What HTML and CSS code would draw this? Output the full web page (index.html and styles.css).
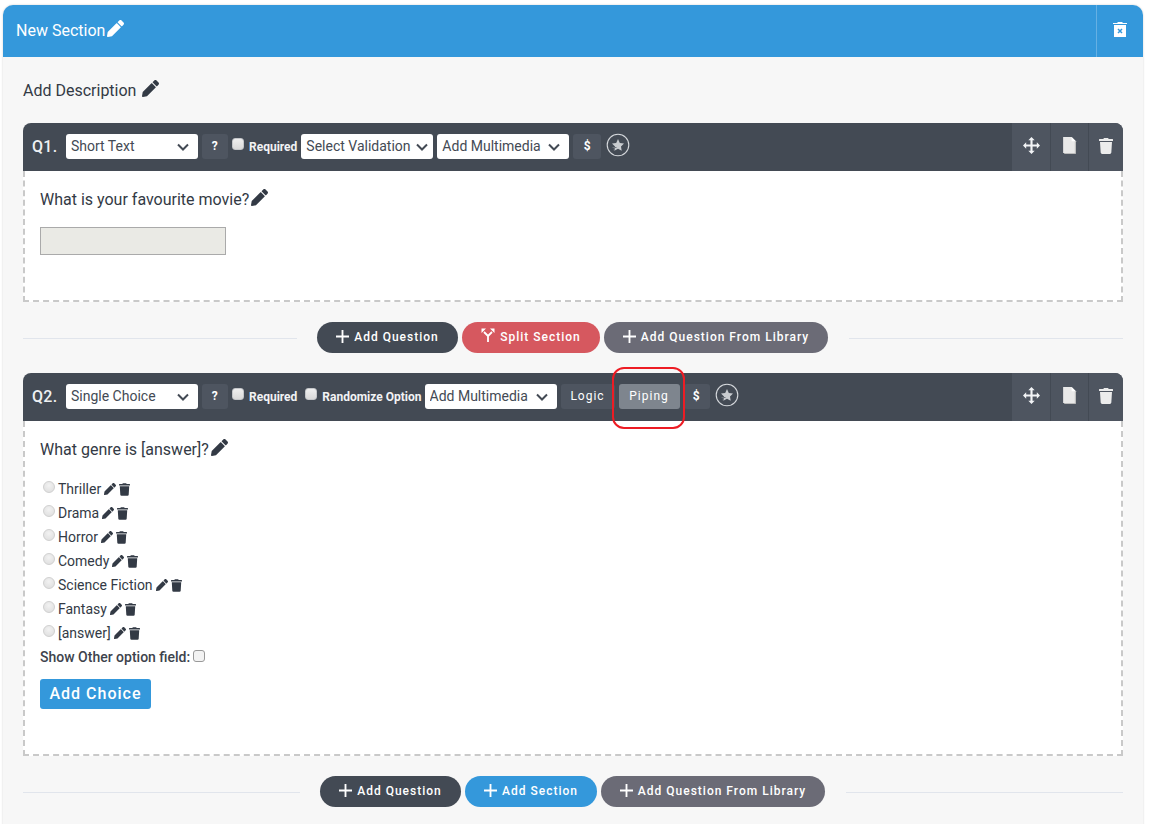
FILE: index.html
```html
<!DOCTYPE html>
<html lang="en">
<head>
<meta charset="utf-8">
<title>Survey builder</title>
<link rel="stylesheet" href="styles.css">
</head>
<body>
<svg class="defs" aria-hidden="true">
  <symbol id="pencil" viewBox="0 0 512 512"><path d="M497.9 142.1l-46.1 46.1c-4.7 4.7-12.3 4.7-17 0l-111-111c-4.7-4.7-4.7-12.3 0-17l46.1-46.1c18.7-18.7 49.1-18.7 67.9 0l60.1 60.1c18.8 18.7 18.8 49.1 0 67.9zM284.2 99.8L21.6 362.4.4 483.9c-2.9 16.4 11.4 30.6 27.8 27.8l121.5-21.3 262.6-262.6c4.7-4.7 4.7-12.3 0-17l-111-111c-4.8-4.7-12.4-4.7-17.1 0z"/></symbol>
  <symbol id="trash" viewBox="0 0 448 512"><path d="M432 32H312l-9.4-18.7A24 24 0 0 0 281.1 0H166.8a23.72 23.72 0 0 0-21.4 13.3L136 32H16A16 16 0 0 0 0 48v32a16 16 0 0 0 16 16h416a16 16 0 0 0 16-16V48a16 16 0 0 0-16-16zM53.2 467a48 48 0 0 0 47.9 45h245.8a48 48 0 0 0 47.9-45L416 128H32z"/></symbol>
  <symbol id="plus" viewBox="0 0 14 14"><path d="M6 0h2v6h6v2H8v6H6V8H0V6h6z"/></symbol>
  <symbol id="chev" viewBox="0 0 12 8"><path d="M1 1.5l5 5 5-5" fill="none" stroke="currentColor" stroke-width="2"/></symbol>
  <symbol id="move" viewBox="0 0 16 16"><path d="M8 0l3 3H9v4h4V5l3 3-3 3V9H9v4h2l-3 3-3-3h2V9H3v2L0 8l3-3v2h4V3H5z"/></symbol>
  <symbol id="file" viewBox="0 0 14 16"><path d="M1 0h8l4 4v11H1z" fill="#e9e9e9"/><path d="M9 0l4 4H9z" fill="#fff"/><path d="M13 4v12H2v-1h10V4z" fill="#bbb"/></symbol>
  <symbol id="star" viewBox="0 0 24 24"><circle cx="12" cy="12" r="10.800" fill="none" stroke="#d5d8dc" stroke-width="1.100"/><path d="M12 6l1.800 3.900 4.200.6-3 3 .7 4.300L12 15.700l-3.700 2.100.7-4.300-3-3 4.200-.6z" fill="#c9ccd0"/><path d="M6.500 14h4v1h-1.800l-.5 2.800-.6-.2.300-2.600H6.500z" fill="#6d737b"/></symbol>
  <symbol id="split" viewBox="0 0 14 14"><path d="M7 14V8M7 8L3 4M7 8l4-4" fill="none" stroke="#fff" stroke-width="1.800"/><path d="M.5 .5h4.500L.5 5zM13.500 .5H9l4.500 4.500z"/></symbol>
</svg>

<section class="panel">
  <header class="panel-head">
    <h1 class="panel-title">New Section<svg class="ico ico-title"><use href="#pencil"/></svg></h1>
    <div class="panel-del">
      <svg class="ico-del" viewBox="0 0 14 16"><path d="M0 2h4l1-1h4l1 1h4v1H0zM1 4h12v12H1z" fill="#fff"/><path d="M5 8l4 4m0-4l-4 4" stroke="#3498db" stroke-width="1.500"/></svg>
    </div>
  </header>

  <div class="panel-body">
    <p class="desc">Add Description<svg class="ico ico-desc"><use href="#pencil"/></svg></p>

    <article class="question">
      <div class="q-bar">
        <span class="q-num">Q1.</span>
        <div class="sel"><select><option>Short Text</option></select><svg class="chev"><use href="#chev"/></svg></div>
        <button class="tb-btn tb-sq">?</button>
        <input class="cb" type="checkbox" disabled>
        <span class="cb-label">Required</span>
        <div class="sel"><select><option>Select Validation</option></select><svg class="chev chev-tight"><use href="#chev"/></svg></div>
        <div class="sel"><select><option>Add Multimedia</option></select><svg class="chev"><use href="#chev"/></svg></div>
        <button class="tb-btn tb-sq tb-dollar">$</button>
        <svg class="star"><use href="#star"/></svg>
        <div class="q-actions">
          <span class="act act-a"><svg class="act-move"><use href="#move"/></svg></span>
          <span class="act act-b"><svg class="act-file"><use href="#file"/></svg></span>
          <span class="act act-c"><svg class="act-trash"><use href="#trash"/></svg></span>
        </div>
      </div>
      <div class="q-body q-body-1">
        <p class="q-text">What is your favourite movie?<svg class="ico ico-q"><use href="#pencil"/></svg></p>
        <div class="fake-input"></div>
      </div>
    </article>

    <div class="divider">
      <span class="rule"></span>
      <button class="pill pill-dark"><svg class="pl"><use href="#plus"/></svg>Add Question</button>
      <button class="pill pill-red"><svg class="pl pl-split"><use href="#split"/></svg>Split Section</button>
      <button class="pill pill-grey"><svg class="pl"><use href="#plus"/></svg>Add Question From Library</button>
      <span class="rule"></span>
    </div>

    <article class="question">
      <div class="q-bar">
        <span class="q-num">Q2.</span>
        <div class="sel"><select><option>Single Choice</option></select><svg class="chev"><use href="#chev"/></svg></div>
        <button class="tb-btn tb-sq">?</button>
        <input class="cb" type="checkbox" disabled>
        <span class="cb-label">Required</span>
        <input class="cb" type="checkbox" disabled>
        <span class="cb-label cb-label-tight">Randomize Option</span>
        <div class="sel"><select><option>Add Multimedia</option></select><svg class="chev"><use href="#chev"/></svg></div>
        <button class="tb-btn tb-logic">Logic</button>
        <button class="tb-btn tb-piping">Piping</button>
        <button class="tb-btn tb-sq">$</button>
        <svg class="star"><use href="#star"/></svg>
        <div class="q-actions">
          <span class="act act-a"><svg class="act-move"><use href="#move"/></svg></span>
          <span class="act act-b"><svg class="act-file"><use href="#file"/></svg></span>
          <span class="act act-c"><svg class="act-trash"><use href="#trash"/></svg></span>
        </div>
        <span class="callout"></span>
      </div>
      <div class="q-body q-body-2">
        <p class="q-text q-text-2">What genre is [answer]?<svg class="ico ico-q"><use href="#pencil"/></svg></p>
        <ul class="choices">
          <li><input class="radio" type="radio" disabled><span>Thriller</span><svg class="ico ico-s"><use href="#pencil"/></svg><svg class="ico ico-t"><use href="#trash"/></svg></li>
          <li><input class="radio" type="radio" disabled><span>Drama</span><svg class="ico ico-s"><use href="#pencil"/></svg><svg class="ico ico-t"><use href="#trash"/></svg></li>
          <li><input class="radio" type="radio" disabled><span>Horror</span><svg class="ico ico-s"><use href="#pencil"/></svg><svg class="ico ico-t"><use href="#trash"/></svg></li>
          <li><input class="radio" type="radio" disabled><span>Comedy</span><svg class="ico ico-s"><use href="#pencil"/></svg><svg class="ico ico-t"><use href="#trash"/></svg></li>
          <li><input class="radio" type="radio" disabled><span>Science Fiction</span><svg class="ico ico-s"><use href="#pencil"/></svg><svg class="ico ico-t"><use href="#trash"/></svg></li>
          <li><input class="radio" type="radio" disabled><span>Fantasy</span><svg class="ico ico-s"><use href="#pencil"/></svg><svg class="ico ico-t"><use href="#trash"/></svg></li>
          <li><input class="radio" type="radio" disabled><span>[answer]</span><svg class="ico ico-s"><use href="#pencil"/></svg><svg class="ico ico-t"><use href="#trash"/></svg></li>
        </ul>
        <label class="other">Show Other option field:<input class="other-cb" type="checkbox"></label>
        <button class="add-choice">Add Choice</button>
      </div>
    </article>

    <div class="divider">
      <span class="rule"></span>
      <button class="pill pill-dark"><svg class="pl"><use href="#plus"/></svg>Add Question</button>
      <button class="pill pill-blue"><svg class="pl"><use href="#plus"/></svg>Add Section</button>
      <button class="pill pill-grey"><svg class="pl"><use href="#plus"/></svg>Add Question From Library</button>
      <span class="rule"></span>
    </div>
  </div>
</section>
</body>
</html>
```

FILE: styles.css
```css
* { box-sizing: border-box; }
html, body { margin: 0; height: 824px; overflow: hidden; background: #fff; }
body { font-family: Roboto, "Liberation Sans", sans-serif; color: #333a45; padding: 5px 6px 0 3px; }
.defs { display: none; }
p, h1, ul { margin: 0; padding: 0; }
button { font-family: inherit; border: 0; cursor: pointer; }

.panel { background: #f7f7f7; border-radius: 10px 10px 0 0; box-shadow: 0 0 2px #c9c9c9; height: 830px; }
.panel-head { display: flex; height: 52px; background: #3498db; border-radius: 10px 10px 0 0; color: #fff; align-items: stretch; }
.panel-title { flex: 1; display: flex; align-items: center; padding: 0 0 2px 13px; font-size: 16px; font-weight: 400; }
.panel-del { width: 47px; border-left: 1px solid #66b0e3; display: flex; align-items: center; justify-content: center; }
.ico-del { width: 14px; height: 16px; margin-bottom: 4px; }

.ico { fill: currentColor; display: inline-block; flex: none; }
.ico-title { width: 17px; height: 17px; margin-left: 2px; margin-top: -3px; }
.panel-body { padding: 20px 20px 0; }
.desc { display: flex; align-items: center; font-size: 16px; height: 26px; margin-bottom: 20px; }
.ico-desc { width: 17px; height: 17px; margin-left: 6px; margin-top: -3px; }

.q-bar { position: relative; display: flex; align-items: center; height: 48px; background: #434a54; border-radius: 8px 8px 0 0; padding-left: 9px; color: #fff; }
.q-num { width: 34px; font-size: 16px; font-weight: 500; letter-spacing: .3px; color: #eef0f2; margin-top: -2px; }
.sel { position: relative; width: 132px; height: 25px; margin: -2px 4px 0 0; }
.sel select { appearance: none; width: 100%; height: 100%; border: 0; border-radius: 3px; background: #fff; color: #434a54; font: 14px Roboto, sans-serif; padding: 0 0 0 5px; }
.chev { position: absolute; right: 9px; top: 9px; width: 12px; height: 8px; color: #434a54; pointer-events: none; }
.chev-tight { right: 5px; }
.tb-btn { height: 25px; margin-top: -2px; border-radius: 3px; background: #4e5560; color: #fff; font-size: 12px; font-weight: 500; letter-spacing: .5px; }
.tb-sq { width: 26px; padding: 0; font-weight: 700; }
.cb { appearance: none; width: 12px; height: 12px; margin: -6px 0 0 4px; border: 1px solid #c4c6c9; border-radius: 3px; background: linear-gradient(#eeeeee, #d9d9d9); }
.cb-label { font-size: 12px; font-weight: 700; margin-left: 5px; margin-right: 4px; color: #f2f3f4; white-space: nowrap; }
.cb-label-tight { margin-right: 3px; }
.tb-dollar { width: 28px; }
.tb-logic { width: 54px; margin-right: 4px; letter-spacing: 1px; font-weight: 400; }
.tb-piping { width: 61px; margin-right: 4px; background: #7e858e; letter-spacing: 1px; font-weight: 400; }
.star { width: 24px; height: 24px; margin-left: 5px; margin-top: -4px; }
.q-actions { margin-left: auto; display: flex; height: 100%; border-radius: 0 8px 0 0; overflow: hidden; }
.act { display: flex; align-items: center; justify-content: center; background: #4e5560; padding-bottom: 3px; }
.act-a { width: 39px; border-right: 1px solid #434a54; }
.act-b { width: 38px; border-right: 1px solid #434a54; }
.act-c { width: 34px; }
.act-move { width: 17px; height: 17px; fill: #f2f4f6; }
.act-file { width: 15px; height: 17px; }
.act-trash { width: 14px; height: 16px; fill: #ececec; }
.callout { position: absolute; left: 589px; top: -6px; width: 73px; height: 62px; border: 2px solid #ed1c24; border-radius: 12px; pointer-events: none; }

.q-body { background: #fff; border: 2px dashed #c9c9c9; border-top: 0; padding: 18px 15px 0; }
.q-body-1 { height: 131px; }
.q-body-2 { height: 335px; }
.q-text { display: flex; align-items: center; font-size: 16px; height: 20px; }
.q-text-2 { margin-bottom: 18px; }
.ico-q { width: 17px; height: 17px; margin-left: 2px; margin-top: -3px; }
.fake-input { width: 186px; height: 28px; margin-top: 18px; background: #eaeae5; border: 1px solid #aaa; }

.choices { list-style: none; }
.choices li { display: flex; align-items: center; height: 24px; font-size: 14px; }
.radio { appearance: none; width: 12px; height: 12px; margin: -4px 3px 0 3px; border: 1px solid #d0d0d0; border-radius: 50%; background: radial-gradient(circle at 50% 35%, #f2f2f2, #dcdcdc); }
.ico-s { width: 12px; height: 12px; margin-left: 3px; }
.ico-t { width: 11px; height: 13px; margin-left: 3px; }
.other { display: flex; align-items: center; height: 24px; font-size: 14px; font-weight: 500; color: #3d434c; }
.other-cb { appearance: none; width: 12px; height: 12px; margin: -3px 0 0 3px; border: 1px solid #999; border-radius: 3px; background: #f3f3f3; }
.add-choice { display: block; width: 111px; height: 30px; margin-top: 10px; padding-bottom: 2px; background: #3498db; color: #fff; border-radius: 3px; font-size: 16px; font-weight: 500; letter-spacing: 1px; }

.divider { display: flex; align-items: center; height: 31px; margin: 20px 0; gap: 4px; }
.rule { flex: 1; height: 1px; margin-top: 2px; background: #e1e5ec; }
.rule:first-child { margin-right: 16px; }
.rule:last-child { margin-left: 17px; }
.pill { display: flex; align-items: center; justify-content: center; height: 31px; border-radius: 16px; color: #fff; font-size: 12px; font-weight: 500; letter-spacing: 1px; padding: 0 0 2px; white-space: nowrap; }
.pl { width: 13px; height: 13px; fill: #fff; margin-right: 5px; }
.pl-split { width: 14px; height: 14px; margin-top: -3px; }
.pill-dark { width: 141px; background: #434a54; }
.pill-red { width: 138px; background: #d6585f; }
.pill-blue { width: 132px; background: #3498db; }
.pill-grey { width: 224px; background: #6b6b76; }
```
